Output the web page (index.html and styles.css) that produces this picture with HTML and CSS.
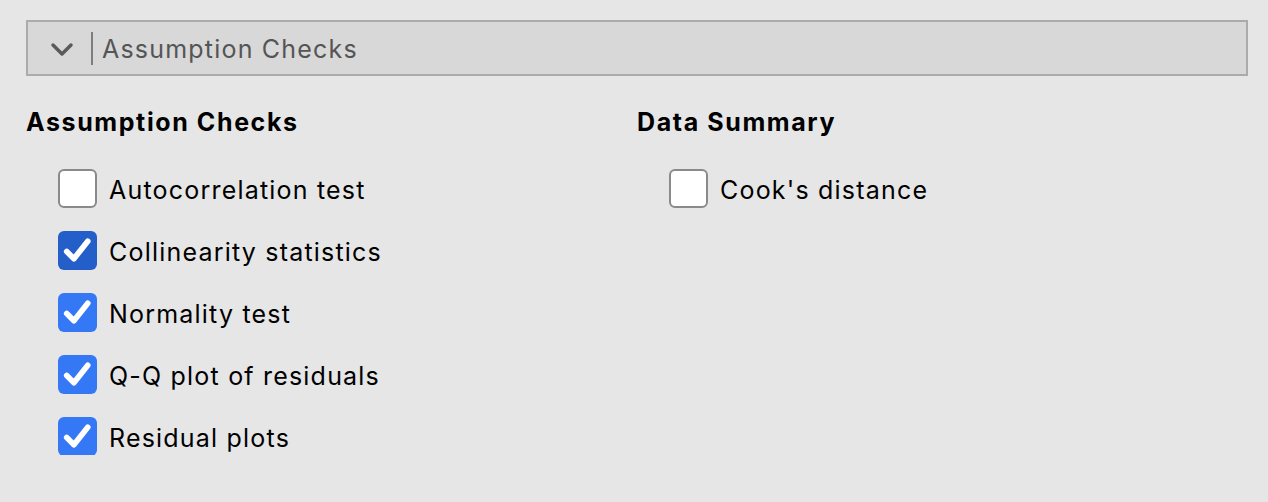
FILE: index.html
```html
<!DOCTYPE html>
<html>
<head>
<meta charset="utf-8">
<link rel="stylesheet" href="styles.css">
</head>
<body>
<div class="page">
  <div class="section-header">
    <svg class="chevron" width="24" height="16" viewBox="0 0 24 16"><path d="M3 3 L12 12 L21 3" fill="none" stroke="#5a5a5a" stroke-width="3.5" stroke-linecap="round" stroke-linejoin="round"/></svg>
    <span class="divider"></span>
    <span class="header-title">Assumption Checks</span>
  </div>
  <div class="columns">
    <div class="group">
      <div class="group-title">Assumption Checks</div>
      <div class="options">
        <label class="option"><span class="box"></span><span class="label">Autocorrelation test</span></label>
        <label class="option"><span class="box checked focused"><svg viewBox="0 0 38 38"><path d="M8.5 20 L15.5 27 L29 10" fill="none" stroke="#fff" stroke-width="5.5" stroke-linecap="round" stroke-linejoin="round"/></svg></span><span class="label">Collinearity statistics</span></label>
        <label class="option"><span class="box checked"><svg viewBox="0 0 38 38"><path d="M8.5 20 L15.5 27 L29 10" fill="none" stroke="#fff" stroke-width="5.5" stroke-linecap="round" stroke-linejoin="round"/></svg></span><span class="label">Normality test</span></label>
        <label class="option"><span class="box checked"><svg viewBox="0 0 38 38"><path d="M8.5 20 L15.5 27 L29 10" fill="none" stroke="#fff" stroke-width="5.5" stroke-linecap="round" stroke-linejoin="round"/></svg></span><span class="label">Q-Q plot of residuals</span></label>
        <label class="option"><span class="box checked"><svg viewBox="0 0 38 38"><path d="M8.5 20 L15.5 27 L29 10" fill="none" stroke="#fff" stroke-width="5.5" stroke-linecap="round" stroke-linejoin="round"/></svg></span><span class="label">Residual plots</span></label>
      </div>
    </div>
    <div class="group">
      <div class="group-title">Data Summary</div>
      <div class="options">
        <label class="option"><span class="box"></span><span class="label">Cook's distance</span></label>
      </div>
    </div>
  </div>
</div>
</body>
</html>
```
FILE: styles.css
```css
html, body {
  margin: 0;
  padding: 0;
  background: #e6e6e6;
}
body {
  font-family: Inter, "Liberation Sans", Arial, sans-serif;
  color: #000;
}
.page {
  padding: 20px 20px 0 26px;
}
.section-header {
  box-sizing: border-box;
  width: 1222px;
  height: 56px;
  border: 2px solid #ababab;
  background: #d8d8d8;
  display: flex;
  align-items: center;
}
.chevron {
  margin-left: 22px;
  margin-top: 3px;
}
.divider {
  width: 2px;
  height: 33px;
  background: #7d7d7d;
  margin-left: 17px;
}
.header-title {
  margin-left: 9px;
  font-size: 25px;
  letter-spacing: 1.2px;
  color: #555;
  margin-top: 1px;
}
.columns {
  display: flex;
  margin-top: 32px;
}
.group {
  width: 611px;
}
.group-title {
  font-size: 25px;
  font-weight: bold;
  line-height: 28px;
  letter-spacing: 1.6px;
}
.options {
  margin-top: 33px;
  padding-left: 32px;
  display: flex;
  flex-direction: column;
  gap: 24px;
}
.option {
  display: flex;
  align-items: center;
  height: 38px;
}
.box {
  box-sizing: border-box;
  width: 39px;
  height: 39px;
  border: 2px solid #8a8a8a;
  border-radius: 6px;
  background: #fff;
  display: flex;
}
.box.checked {
  border: none;
  background: #3478f6;
}
.box.checked.focused {
  background: #245ec9;
}
.box svg {
  width: 100%;
  height: 100%;
}
.label {
  margin-left: 12px;
  font-size: 25px;
  letter-spacing: 1.2px;
  margin-top: 4px;
}
```
